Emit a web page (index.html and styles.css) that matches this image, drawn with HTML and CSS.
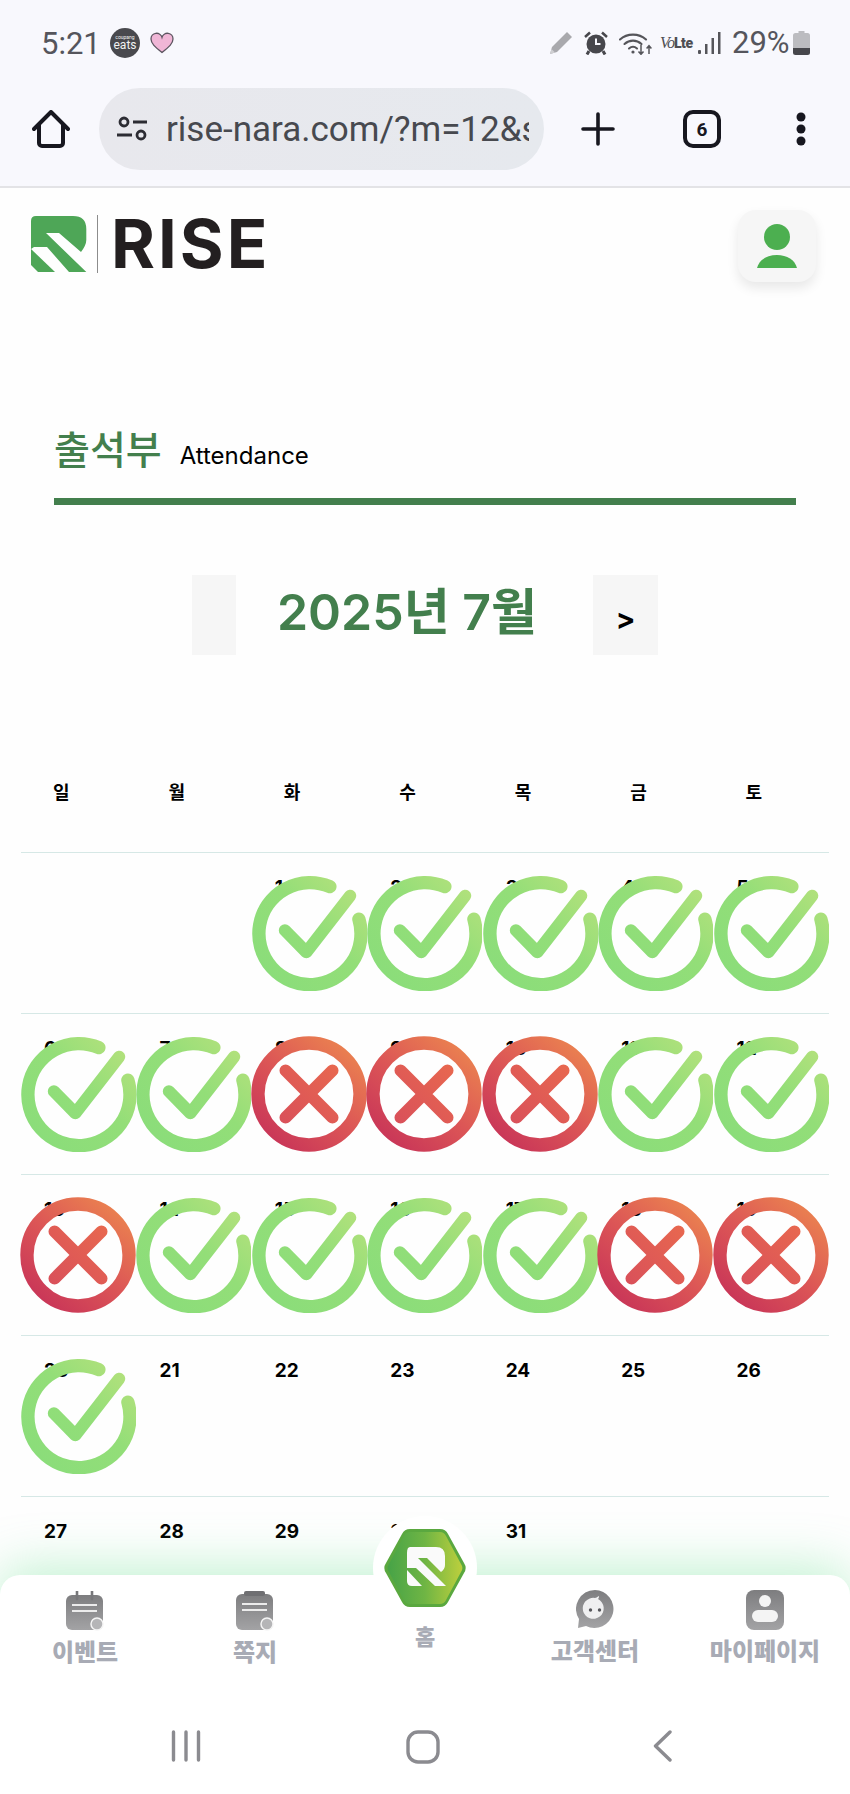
FILE: index.html
```html
<!DOCTYPE html>
<html lang="ko">
<head>
<meta charset="utf-8">
<title>출석부</title>
<link rel="stylesheet" href="styles.css">
</head>
<body>
<svg class="sprites" aria-hidden="true">
  <defs>
    <linearGradient id="okRing" gradientUnits="userSpaceOnUse" x1="15" y1="85" x2="90" y2="10">
      <stop offset="0" stop-color="#8bdd7a"/><stop offset=".55" stop-color="#93de78"/><stop offset="1" stop-color="#b3e17c"/>
    </linearGradient>
    <linearGradient id="noRing" gradientUnits="userSpaceOnUse" x1="20" y1="92" x2="85" y2="12">
      <stop offset="0" stop-color="#c93658"/><stop offset=".5" stop-color="#dc5656"/><stop offset="1" stop-color="#ea8050"/>
    </linearGradient>
    <linearGradient id="noCross" gradientUnits="userSpaceOnUse" x1="25" y1="75" x2="75" y2="25">
      <stop offset="0" stop-color="#d9505a"/><stop offset="1" stop-color="#e8684f"/>
    </linearGradient>
    <linearGradient id="hexFill" x1="0" y1="0" x2="1" y2="0">
      <stop offset="0" stop-color="#47a347"/><stop offset=".5" stop-color="#6fb544"/><stop offset="1" stop-color="#bccf3d"/>
    </linearGradient>
    <linearGradient id="navGrey" x1="0" y1="0" x2="0" y2="1">
      <stop offset="0" stop-color="#7d7d7f"/><stop offset="1" stop-color="#a3a3a5"/>
    </linearGradient>
    <symbol id="ok" viewBox="0 0 100 100">
      <path d="M68 10A44 44 0 1 0 93 38" fill="none" stroke="url(#okRing)" stroke-width="11.500" stroke-linecap="round"/>
      <path d="M29.200 47.700 47.700 66.500 85.500 17.900" fill="none" stroke="url(#okRing)" stroke-width="10.500" stroke-linecap="round" stroke-linejoin="round"/>
    </symbol>
    <symbol id="no" viewBox="0 0 100 100">
      <circle cx="50" cy="50" r="44" fill="none" stroke="url(#noRing)" stroke-width="11.500"/>
      <path d="M29.800 29.800 70.200 70.200M70.200 29.800 29.800 70.200" fill="none" stroke="url(#noCross)" stroke-width="10.500" stroke-linecap="round"/>
    </symbol>
  </defs>
</svg>

<header class="chrome">
  <div class="status">
    <div class="status-left">
      <span class="clock">5:21</span>
      <span class="eats"><span class="eats-small">coupang</span><span class="eats-big">eats</span></span>
      <svg class="heart" viewBox="0 0 24 22"><path d="M12 20.500C5 15 1 11.500 1 7a5.600 5.600 0 0 1 11-1.600A5.600 5.600 0 0 1 23 7c0 4.500-4 8-11 13.500z" fill="#f0b6d6" stroke="#5c5560" stroke-width="1.300"/></svg>
    </div>
    <div class="status-right">
      <svg class="st-pencil" viewBox="0 0 25 25"><path d="M1 24l2-7L18 2l5 5L8 22z" fill="#a9a9ad"/><path d="M1 24l1.500-5 3.500 3.500z" fill="#cfcfd2"/></svg>
      <svg class="st-alarm" viewBox="0 0 24 24"><circle cx="12" cy="13" r="9.500" fill="#47474c"/><path d="M12 7.500V13h4.500" fill="none" stroke="#f8f8fd" stroke-width="2"/><path d="M1 6l5-4.500M23 6l-5-4.500" stroke="#47474c" stroke-width="2.500"/><path d="M5 20l-2 3.500M19 20l2 3.500" stroke="#47474c" stroke-width="3"/></svg>
      <svg class="st-wifi" viewBox="0 0 33 24"><g fill="none" stroke="#55555a" stroke-width="2.100" stroke-linecap="round"><path d="M1 8.500C8 2 20 2 27 8.500"/><path d="M5.500 13C10.500 8.500 17.500 8.500 22.500 13"/><path d="M10 17.500c2.500-2.200 5.500-2.200 8 0"/></g><circle cx="14" cy="21" r="1.600" fill="#55555a"/><path d="M22 14v9M19.500 20.500l2.500 2.800 2.500-2.800M30 23v-8M27.600 17.500 30 14.700l2.400 2.800" fill="none" stroke="#55555a" stroke-width="1.500"/></svg>
      <span class="volte"><i>Vo</i><b>Lte</b></span>
      <svg class="st-signal" viewBox="0 0 23 24"><g fill="#55555a"><rect x="0" y="19" width="3" height="4" rx="1"/><rect x="7" y="13" width="2.500" height="10"/><rect x="13.500" y="7" width="2.500" height="16"/><rect x="20" y="1" width="2.500" height="22"/></g></svg>
      <span class="battery-text">29%</span>
      <svg class="st-battery" viewBox="0 0 17 24"><path d="M5.500 0h6v2h3a2.500 2.500 0 0 1 2.500 2.500V17H0V4.500A2.500 2.500 0 0 1 2.500 2h3z" fill="#bcbcc0"/><path d="M0 17h17v4.500a2.500 2.500 0 0 1-2.500 2.500h-12A2.500 2.500 0 0 1 0 21.500z" fill="#47474c"/></svg>
    </div>
  </div>
  <div class="toolbar">
    <svg class="tb-home" viewBox="0 0 38 38"><path d="M2 19 19 2l17 17M7 15v18a3 3 0 0 0 3 3h18a3 3 0 0 0 3-3V15" fill="none" stroke="#17171f" stroke-width="4" stroke-linecap="round" stroke-linejoin="round"/></svg>
    <div class="urlbar">
      <svg class="tune" viewBox="0 0 30 26"><g fill="none" stroke="#2c2c33" stroke-width="2.800"><circle cx="7" cy="6" r="4"/><path d="M16 6h14M0 19h15"/><circle cx="24" cy="19" r="4"/></g></svg>
      <span class="url">rise-nara.com/?m=12&amp;s</span>
    </div>
    <svg class="tb-plus" viewBox="0 0 34 34"><path d="M17 2v30M2 17h30" stroke="#17171f" stroke-width="3.600" stroke-linecap="round"/></svg>
    <span class="tabs">6</span>
    <svg class="tb-more" viewBox="0 0 10 34"><circle cx="5" cy="5" r="4.500" fill="#17171f"/><circle cx="5" cy="17" r="4.500" fill="#17171f"/><circle cx="5" cy="29" r="4.500" fill="#17171f"/></svg>
  </div>
</header>

<div class="site-header">
  <div class="logo">
    <svg class="logo-mark" viewBox="0 0 56 56">
      <path d="M5 0H42Q55.300 0 55.300 13V24Q55.300 29 50 36L28 17H15L55.300 56H38L16 31H3L0 33V5Q0 0 5 0Z" fill="#4ea657"/>
      <path d="M0 33 24 56H7L0 49Z" fill="#4ea657"/>
    </svg>
    <span class="logo-rule"></span>
    <span class="logo-word">RISE</span>
  </div>
  <button class="profile" type="button" aria-label="프로필">
    <svg viewBox="0 0 40 44"><circle cx="20" cy="13" r="13" fill="#4caf50"/><path d="M0 44C2 36 10 31 20 31s18 5 20 13z" fill="#4caf50"/></svg>
  </button>
</div>

<div class="page-title">
  <h1>출석부</h1>
  <span>Attendance</span>
</div>

<div class="month-nav">
  <button class="month-btn prev" type="button" aria-label="이전 달"></button>
  <h2>2025년 7월</h2>
  <button class="month-btn next" type="button">&gt;</button>
</div>

<section class="calendar">
  <div class="weekdays">
    <span>일</span><span>월</span><span>화</span><span>수</span><span>목</span><span>금</span><span>토</span>
  </div>
  <div class="week">
    <div class="day"></div>
    <div class="day"></div>
    <div class="day">1<svg class="mark"><use href="#ok"/></svg></div>
    <div class="day">2<svg class="mark"><use href="#ok"/></svg></div>
    <div class="day">3<svg class="mark"><use href="#ok"/></svg></div>
    <div class="day">4<svg class="mark"><use href="#ok"/></svg></div>
    <div class="day">5<svg class="mark"><use href="#ok"/></svg></div>
  </div>
  <div class="week">
    <div class="day">6<svg class="mark"><use href="#ok"/></svg></div>
    <div class="day">7<svg class="mark"><use href="#ok"/></svg></div>
    <div class="day">8<svg class="mark"><use href="#no"/></svg></div>
    <div class="day">9<svg class="mark"><use href="#no"/></svg></div>
    <div class="day">10<svg class="mark"><use href="#no"/></svg></div>
    <div class="day">11<svg class="mark"><use href="#ok"/></svg></div>
    <div class="day">12<svg class="mark"><use href="#ok"/></svg></div>
  </div>
  <div class="week">
    <div class="day">13<svg class="mark"><use href="#no"/></svg></div>
    <div class="day">14<svg class="mark"><use href="#ok"/></svg></div>
    <div class="day">15<svg class="mark"><use href="#ok"/></svg></div>
    <div class="day">16<svg class="mark"><use href="#ok"/></svg></div>
    <div class="day">17<svg class="mark"><use href="#ok"/></svg></div>
    <div class="day">18<svg class="mark"><use href="#no"/></svg></div>
    <div class="day">19<svg class="mark"><use href="#no"/></svg></div>
  </div>
  <div class="week">
    <div class="day">20<svg class="mark"><use href="#ok"/></svg></div>
    <div class="day">21</div>
    <div class="day">22</div>
    <div class="day">23</div>
    <div class="day">24</div>
    <div class="day">25</div>
    <div class="day">26</div>
  </div>
  <div class="week">
    <div class="day">27</div>
    <div class="day">28</div>
    <div class="day">29</div>
    <div class="day">30</div>
    <div class="day">31</div>
    <div class="day"></div>
    <div class="day"></div>
  </div>
</section>

<div class="dock">
  <nav class="tabbar">
    <a class="tab">
      <svg class="tab-icon" viewBox="0 0 38 40">
        <rect x="0" y="4" width="37" height="35" rx="6" fill="url(#navGrey)"/>
        <path d="M11 0v8M26 0v8" stroke="#77777a" stroke-width="2.600" stroke-linecap="round"/>
        <path d="M6 14h25M6 20h25" stroke="#ececec" stroke-width="2.200"/>
        <circle cx="31" cy="33" r="6" fill="#b5b5b7" stroke="#f4f4f4" stroke-width="1.500"/>
      </svg>
      <span class="tab-label">이벤트</span>
    </a>
    <a class="tab">
      <svg class="tab-icon" viewBox="0 0 38 40">
        <rect x="0" y="3" width="37" height="36" rx="6" fill="url(#navGrey)"/>
        <rect x="8" y="0" width="21" height="5" rx="2" fill="#6f6f72"/>
        <path d="M6 13h25M6 19h25" stroke="#ececec" stroke-width="2.200"/>
        <circle cx="31" cy="33" r="6" fill="#b5b5b7" stroke="#f4f4f4" stroke-width="1.500"/>
      </svg>
      <span class="tab-label">쪽지</span>
    </a>
    <a class="tab tab-home">
      <span class="home-disc">
        <svg class="hex" viewBox="0 0 84 78">
          <path d="M3 44a9 9 0 0 1 0-10L19 5a9 9 0 0 1 8-5H57a9 9 0 0 1 8 5L81 34a9 9 0 0 1 0 10L65 73a9 9 0 0 1-8 5H27a9 9 0 0 1-8-5z" fill="#5aa83f"/>
          <path d="M6 43a7 7 0 0 1 0-8L21 7a7 7 0 0 1 7-4H56a7 7 0 0 1 7 4L78 35a7 7 0 0 1 0 8L63 71a7 7 0 0 1-7 4H28a7 7 0 0 1-7-4z" fill="url(#hexFill)"/>
          <path d="M27 18H53Q62 18 62 27V36Q62 40 58 43L44 29H35L63 57H52L33 39H24V24Q24 18 27 18Z" fill="#fafafa"/>
          <path d="M24 41 39 57H29Q24 57 24 52Z" fill="#fafafa"/>
        </svg>
      </span>
      <span class="tab-label">홈</span>
    </a>
    <a class="tab">
      <svg class="tab-icon tall" viewBox="0 0 38 40">
        <path d="M19 0a19 19 0 1 1-9 36L2 38l1-9A19 19 0 0 1 19 0z" fill="url(#navGrey)"/>
        <path d="M19 8c1 0 2-1 4-2 0 1 0 2-1 3a10.500 10.500 0 1 1-3-1z" fill="#efeff0"/>
        <circle cx="14.500" cy="20" r="1.700" fill="#55555a"/><circle cx="23.500" cy="20" r="1.700" fill="#55555a"/>
      </svg>
      <span class="tab-label">고객센터</span>
    </a>
    <a class="tab">
      <svg class="tab-icon tall" viewBox="0 0 38 40">
        <rect x="0" y="0" width="38" height="40" rx="8" fill="url(#navGrey)"/>
        <circle cx="19" cy="11" r="6" fill="#f4f4f4"/>
        <rect x="6" y="20" width="26" height="12" rx="6" fill="#f4f4f4"/>
      </svg>
      <span class="tab-label">마이페이지</span>
    </a>
  </nav>
  <div class="system-nav">
    <svg class="sys-recent" viewBox="0 0 30 32"><path d="M2.500 2v28M15 2v28M27.500 2v28" stroke="#8b8b90" stroke-width="3.400" stroke-linecap="round"/></svg>
    <svg class="sys-home" viewBox="0 0 34 34"><rect x="2" y="2" width="30" height="30" rx="10" fill="none" stroke="#8b8b90" stroke-width="3.400"/></svg>
    <svg class="sys-back" viewBox="0 0 19 32"><path d="M17 2 2.500 16 17 30" fill="none" stroke="#8b8b90" stroke-width="3.400" stroke-linecap="round" stroke-linejoin="round"/></svg>
  </div>
</div>
</body>
</html>
```
FILE: styles.css
```css
* { box-sizing: border-box; }

html, body {
  margin: 0;
  height: 1794px;
  overflow: hidden;
  background: #fefefe;
}

body {
  position: relative;
  font-family: Inter, "Noto Sans CJK KR", sans-serif;
  color: #000;
}

.sprites { position: absolute; width: 0; height: 0; }

/* Phone status bar and browser toolbar */
.chrome {
  height: 188px;
  background: #f8f8fd;
  border-bottom: 2px solid #e3e3e6;
}

.status {
  height: 88px;
  padding: 0 40px 0 41px;
  display: flex;
  justify-content: space-between;
  align-items: flex-start;
  font-family: Roboto, sans-serif;
  color: #55555c;
}

.status-left, .status-right { display: flex; align-items: center; padding-top: 28px; }

.clock { font-size: 31px; line-height: 29px; width: 69px; }

.eats {
  width: 30px;
  height: 30px;
  border-radius: 50%;
  background: #49494e;
  color: #f2f2f2;
  display: flex;
  flex-direction: column;
  align-items: center;
  justify-content: center;
  line-height: 1;
}
.eats-small { font-size: 5px; }
.eats-big { font-size: 12px; margin-top: -1px; }

.heart { width: 24px; height: 22px; margin-left: 10px; }

.st-pencil { width: 25px; height: 25px; margin-right: 10px; }
.st-alarm { width: 24px; height: 24px; margin-right: 11px; }
.st-wifi { width: 33px; height: 24px; margin-right: 8px; }
.volte { width: 33px; margin-right: 5px; line-height: 24px; white-space: nowrap; color: #4e4e53; }
.volte i { font-family: "Liberation Serif", serif; font-size: 16px; letter-spacing: -1px; }
.volte b { font-size: 14px; font-weight: 900; letter-spacing: -.5px; }
.st-signal { width: 23px; height: 24px; margin-right: 11px; }
.battery-text { font-size: 31px; line-height: 29px; width: 61px; }
.st-battery { width: 17px; height: 24px; }

.toolbar {
  height: 82px;
  padding-left: 32px;
  display: flex;
  align-items: center;
}

.tb-home { width: 38px; height: 38px; }

.urlbar {
  width: 445px;
  height: 82px;
  margin-left: 29px;
  border-radius: 41px;
  background: linear-gradient(90deg, #e8e8ed, #e6e9ee);
  display: flex;
  align-items: center;
  padding-left: 18px;
}

.tune { width: 30px; height: 26px; flex: none; }

.url {
  width: 363px;
  margin-left: 19px;
  overflow: hidden;
  white-space: nowrap;
  font-family: Roboto, sans-serif;
  font-size: 35px;
  color: #47494f;
}

.tb-plus { width: 34px; height: 34px; margin-left: 37px; }

.tabs {
  width: 38px;
  height: 38px;
  margin-left: 68px;
  border: 4px solid #17171f;
  border-radius: 10px;
  display: flex;
  align-items: center;
  justify-content: center;
  font: 700 19px/1 Roboto, sans-serif;
  color: #17171f;
}

.tb-more { width: 10px; height: 34px; margin-left: 75px; }

/* Site header */
.site-header {
  height: 119px;
  padding: 22px 34px 0 31px;
  display: flex;
  justify-content: space-between;
  align-items: flex-start;
}

.logo { display: flex; align-items: center; height: 62px; margin-top: 3px; }
.logo-mark { width: 56px; height: 56px; }
.logo-rule { width: 1px; height: 58px; margin: 0 13px 0 10px; background: #8c8c8c; }
.logo-word { font: 700 67px/62px Inter, sans-serif; letter-spacing: 3px; color: #231f20; }

.profile {
  width: 78px;
  height: 72px;
  padding: 0;
  border: 0;
  border-radius: 18px;
  background: #f6f6f6;
  box-shadow: 0 6px 12px rgba(0, 0, 0, .09);
  display: flex;
  align-items: center;
  justify-content: center;
}
.profile svg { width: 40px; height: 44px; }

/* Page heading */
.page-title {
  height: 198px;
  margin: 0 54px;
  padding-top: 115px;
  border-bottom: 7px solid #437f4d;
  display: flex;
  align-items: baseline;
}
.page-title h1 {
  margin: 0;
  font-size: 39px;
  font-weight: 500;
  line-height: 56px;
  color: #437f4d;
}
.page-title span { margin-left: 18px; font-size: 24px; }

/* Month switcher */
.month-nav {
  height: 80px;
  margin-top: 70px;
  display: flex;
  justify-content: center;
  align-items: stretch;
}
.month-nav h2 {
  margin: 0 56px 0 41px;
  font-size: 50px;
  font-weight: 600;
  line-height: 74px;
  color: #437f4d;
  white-space: nowrap;
}
.month-btn {
  border: 0;
  padding: 6px 0 0;
  background: #f6f6f6;
  font: 700 29px/1 Inter, sans-serif;
  color: #000;
}
.month-btn.prev { width: 44px; }
.month-btn.next { width: 65px; }

/* Calendar grid */
.calendar { padding: 0 21px; }

.weekdays {
  height: 197px;
  padding-top: 122px;
  display: grid;
  grid-template-columns: repeat(7, 1fr);
  font-size: 18px;
  font-weight: 700;
  line-height: 32px;
}
.weekdays span { padding-left: 32px; }

.week {
  height: 161px;
  border-top: 1px solid #d6e8e6;
  display: grid;
  grid-template-columns: repeat(7, 1fr);
}

.day {
  position: relative;
  padding: 23px 0 0 23px;
  font-size: 19px;
  font-weight: 700;
  line-height: 24px;
}

.mark {
  position: absolute;
  left: -1px;
  top: 22px;
  width: 116px;
  height: 116px;
}

/* Bottom navigation */
.dock {
  position: absolute;
  left: 0;
  right: 0;
  bottom: 0;
  height: 219px;
  background: #fff;
  border-radius: 20px 20px 0 0;
  box-shadow: 0 -8px 50px rgba(80, 220, 125, .34);
}

.tabbar {
  height: 118px;
  display: grid;
  grid-template-columns: repeat(5, 1fr);
}

.tab {
  position: relative;
  display: flex;
  flex-direction: column;
  align-items: center;
  padding-top: 16px;
}

.tab-icon { width: 38px; height: 40px; }
.tab-icon.tall { margin-top: -1px; }

.tab-label {
  margin-top: 7px;
  font-size: 24px;
  font-weight: 900;
  line-height: 30px;
  color: #a8abb5;
  white-space: nowrap;
}

.tab-home { padding-top: 47px; }
.tab-home .tab-label { margin-top: 0; font-size: 22px; }

.home-disc {
  position: absolute;
  left: 50%;
  top: -59px;
  width: 104px;
  height: 104px;
  margin-left: -52px;
  border-radius: 50%;
  background: #fff;
  display: flex;
  align-items: center;
  justify-content: center;
}
.hex { width: 84px; height: 78px; }

.system-nav {
  position: relative;
  height: 101px;
}
.system-nav svg { position: absolute; top: 37px; }
.sys-recent { left: 171px; width: 30px; height: 32px; }
.sys-home { left: 406px; width: 34px; height: 34px; }
.sys-back { left: 653px; width: 19px; height: 32px; }
```
